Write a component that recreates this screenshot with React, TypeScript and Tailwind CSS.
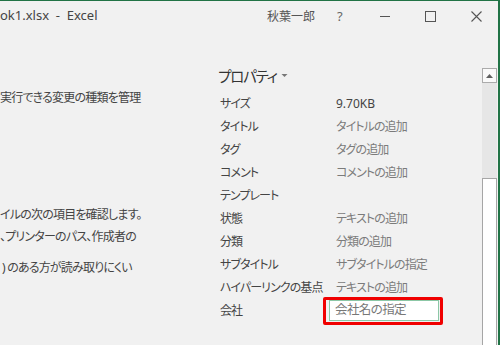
export default function App() {
  const jp = "font-['Noto_Sans','Noto_Sans_CJK_JP',sans-serif] [font-feature-settings:'palt']";
  const props: { label: string; value?: string; dark?: boolean; input?: boolean }[] = [
    { label: 'サイズ', value: '9.70KB', dark: true },
    { label: 'タイトル', value: 'タイトルの追加' },
    { label: 'タグ', value: 'タグの追加' },
    { label: 'コメント', value: 'コメントの追加' },
    { label: 'テンプレート' },
    { label: '状態', value: 'テキストの追加' },
    { label: '分類', value: '分類の追加' },
    { label: 'サブタイトル', value: 'サブタイトルの指定' },
    { label: 'ハイパーリンクの基点', value: 'テキストの追加' },
    { label: '会社', value: '会社名の指定', input: true },
  ];

  return (
    <div className={`w-[500px] h-[345px] overflow-hidden bg-[#f1f1f1] border-t border-r-2 border-[#217346] ${jp}`}>
      {/* Title bar */}
      <div className="h-[31px] flex items-center text-[#444]">
        <div className="text-[13px] whitespace-pre w-[267px] pb-[1px]">ok1.xlsx  -  Excel</div>
        <div className="text-[12px] text-[#555] w-[70px]">秋葉一郎</div>
        <div className="text-[13px] text-[#666] w-[43px]">?</div>
        <div className="w-[45px] flex">
          <svg width="11" height="11" viewBox="0 0 11 11">
            <path d="M0 5.5h10" stroke="#555" strokeWidth="1" />
          </svg>
        </div>
        <div className="w-[46px] flex">
          <svg width="11" height="11" viewBox="0 0 11 11">
            <rect x="0.5" y="0.5" width="10" height="10" fill="none" stroke="#555" strokeWidth="1" />
          </svg>
        </div>
        <div className="flex">
          <svg width="11" height="11" viewBox="0 0 11 11">
            <path d="M0.5 0.5l10 10M10.5 0.5l-10 10" stroke="#555" strokeWidth="1.1" />
          </svg>
        </div>
      </div>

      <div className="flex">
        {/* Left text */}
        <div className="w-[218px] text-[12px] tracking-[-0.8px] text-[#444] leading-[22px] whitespace-nowrap">
          <div className="mt-[55px]">実行できる変更の種類を管理</div>
          <div className="mt-[95px]">イルの次の項目を確認します。</div>
          <div>、プリンターのパス、作成者の</div>
          <div className="mt-[9px] ml-[2px]">) のある方が読み取りにくい</div>
        </div>

        {/* Properties */}
        <div className="flex-1 pt-[33px]">
          <div className="h-[24px] flex items-center text-[14.5px] tracking-[-1.2px] text-[#333]">
            プロパティ
            <svg width="7" height="5" viewBox="0 0 7 5" className="ml-[4px] mb-[4px]">
              <path d="M0.5 1h6L3.5 4z" fill="#777" />
            </svg>
          </div>
          <div className="mt-[3px] ml-[2px] text-[12px] tracking-[-0.9px]">
            {props.map((p) => (
              <div key={p.label} className="h-[23px] flex items-center">
                <div className="w-[116px] shrink-0 text-[#444]">{p.label}</div>
                {p.input ? (
                  <div className="ml-[-13px] border-[3.5px] border-[#f00000] rounded-[2px] pl-[3px] pr-[1px] py-[0.5px]">
                    <div className="w-[110px] h-[21px] bg-white border border-[#8cc7a6] flex items-center pl-[5px] text-[12.5px] tracking-[-0.6px] text-[#777]">
                      {p.value}
                    </div>
                  </div>
                ) : (
                  <div className={p.dark ? 'text-[#444] tracking-normal' : 'text-[#7b7b7b]'}>{p.value}</div>
                )}
              </div>
            ))}
          </div>
        </div>

        {/* Scrollbar */}
        <div className="w-[15px] mt-[36px] mr-[1px] flex flex-col h-[280px] bg-[#e6e6e6]">
          <div className="h-[15px] bg-[#fafafa] border border-[#ababab] flex items-center justify-center">
            <svg width="7" height="4" viewBox="0 0 7 4">
              <path d="M0 4h7L3.5 0z" fill="#606060" />
            </svg>
          </div>
          <div className="h-[95px]" />
          <div className="flex-1 bg-white border border-[#a6a6a6]" />
        </div>
      </div>
    </div>
  );
}
